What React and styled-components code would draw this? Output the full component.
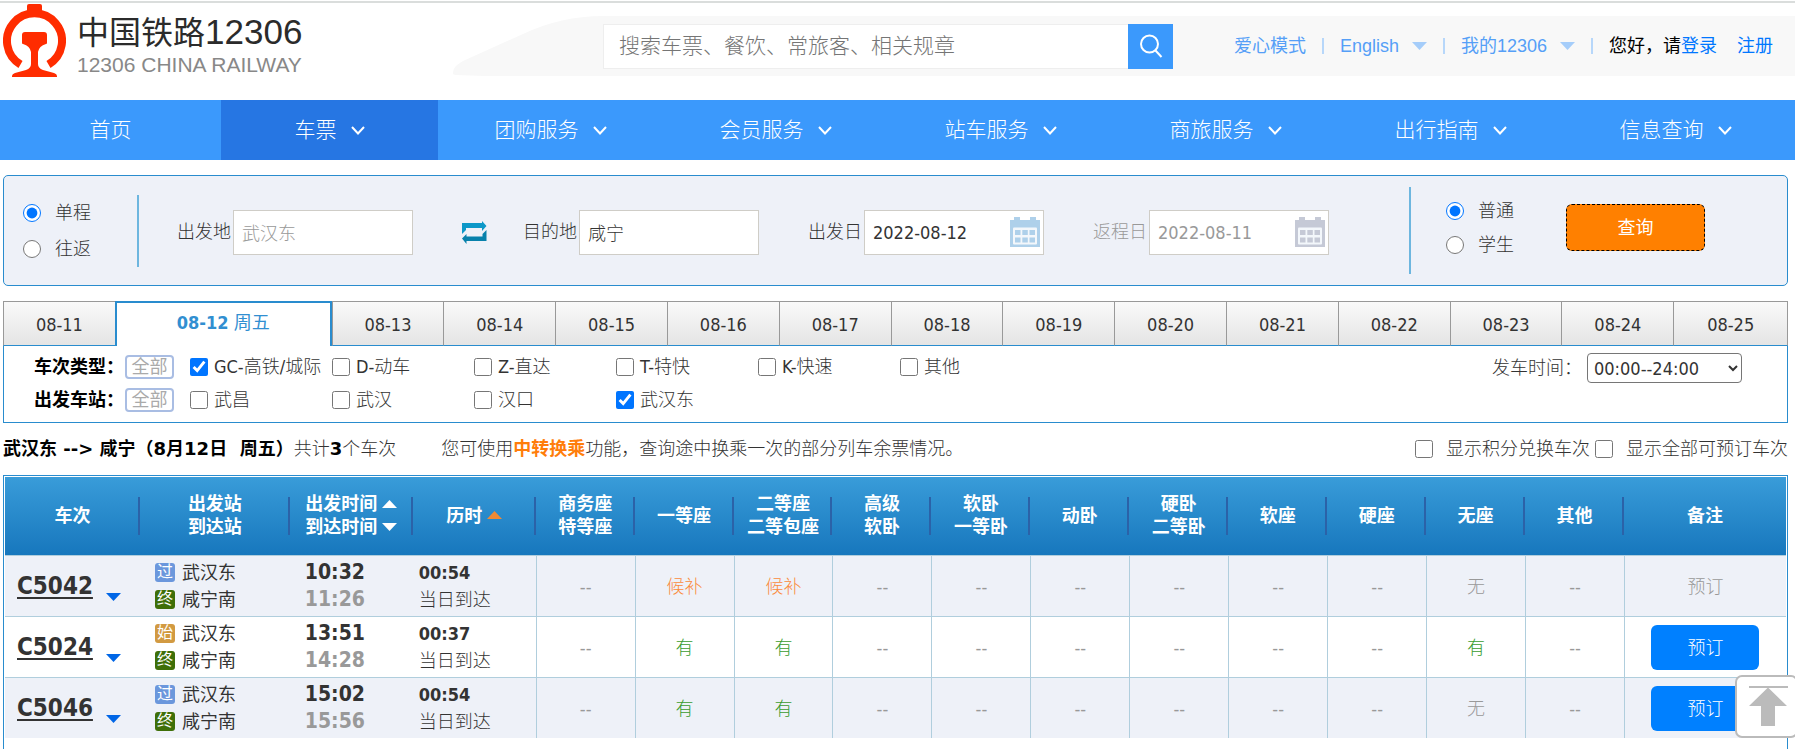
import React from 'react'
import styled, { createGlobalStyle, css } from 'styled-components'

const GlobalStyle = createGlobalStyle`
  * { box-sizing: border-box; }
  body {
    margin: 0;
    background: #fff;
    color: #333;
    font-family: "DejaVu Sans Condensed", "Noto Sans CJK SC", sans-serif;
    font-size: 18px;
    font-weight: 300;
    line-height: 24px;
  }
  a { text-decoration: none; }
  b { font-weight: 700; }
  button, input, select { font: inherit; margin: 0; }
  input[type="radio"], input[type="checkbox"] {
    width: 18px;
    height: 18px;
    flex: none;
  }
  svg { display: block; flex: none; }
`

/* ---------- header ---------- */

const Header = styled.header`
  display: flex;
  height: 100px;
  padding-top: 1px;
  font-family: "Liberation Sans", "Noto Sans CJK SC", sans-serif;
`
const TopLine = styled.div`
  height: 2px;
  margin-top: 1px;
  background: #dadddc;
  margin-bottom: -3px;
`
const Logo = styled.a`
  display: flex;
  flex: 0 0 453px;
  gap: 11px;
  padding: 3px 0 0 3px;
  color: #2b2b2b;
`
const LogoText = styled.div`
  padding-top: 8px;
  strong {
    display: block;
    font-size: 32px;
    font-weight: 400;
    line-height: 40px;
  }
  b {
    font-size: 35px;
    font-weight: 400;
  }
  small {
    display: block;
    color: #888;
    font-size: 21px;
    line-height: 24px;
  }
`
const Band = styled.div`
  display: flex;
  flex: 1;
  height: 60px;
  margin-top: 15px;
`
const BandBody = styled.div`
  display: flex;
  flex: 1;
  align-items: center;
  padding-right: 22px;
  background: #f8f8f8;
`
const SearchForm = styled.form`
  display: flex;
  height: 45px;
  input {
    width: 525px;
    padding: 0 15px;
    border: 1px solid #eee;
    border-right: 0;
    background: #fff;
    font-size: 21px;
    outline: none;
  }
  input::placeholder { color: #757575; }
  button {
    display: flex;
    align-items: center;
    justify-content: center;
    width: 45px;
    padding: 0;
    border: 0;
    background: #3b99fc;
  }
`
const UserLinks = styled.div`
  display: flex;
  align-items: center;
  gap: 16px;
  margin-left: auto;
  color: #000;
  font-weight: 400;
  white-space: nowrap;
`
const TopLink = styled.a`
  display: flex;
  align-items: center;
  gap: 13px;
  color: #559ff7;
`
const AuthLink = styled.a`
  color: #0077ff;
  & + & { margin-left: 20px; }
`
const Bar = styled.i`
  width: 2px;
  height: 16px;
  background: #b7d7fa;
`

/* ---------- main menu ---------- */

const Nav = styled.nav`
  display: grid;
  grid-template-columns: 221fr 217fr repeat(6, 225fr);
  height: 60px;
  padding-right: 7px;
  background: #3b99fc;
`
const NavItem = styled.a`
  display: flex;
  align-items: center;
  justify-content: center;
  gap: 14px;
  background: ${p => (p.$active ? '#2676e3' : 'transparent')};
  color: #fff;
  font-size: 21px;
`

/* ---------- query form ---------- */

const Main = styled.main`
  padding: 15px 7px 0 3px;
`
const QueryBox = styled.form`
  display: flex;
  align-items: center;
  height: 111px;
  padding: 0 82px 0 19px;
  border: 1px solid #298cce;
  border-radius: 5px;
  background: #eef1f8;
`
const RadioGroup = styled.div`
  display: flex;
  flex-direction: column;
  gap: ${p => p.$gap}px;
  label {
    display: flex;
    align-items: center;
    gap: 14px;
  }
`
const Rule = styled.div`
  width: 2px;
  height: ${p => p.$height}px;
  margin: ${p => p.$margin};
  background: #6db6df;
`
const Fields = styled.div`
  display: flex;
  align-items: center;
  gap: 49px;
  padding-top: 3px;
`
const Field = styled.div`
  display: flex;
  align-items: center;
  gap: 2px;
  color: ${p => (p.$muted ? '#999' : '#333')};
  white-space: nowrap;
`
const InputWrap = styled.div`
  position: relative;
  input {
    display: block;
    width: 180px;
    height: 45px;
    padding: 0 8px;
    border: 1px solid #cfcdc7;
    background: #fff;
    color: ${p => (p.$muted ? '#999' : '#333')};
  }
  svg {
    position: absolute;
    top: 7px;
    right: 4px;
  }
`
const SwapButton = styled.button`
  padding: 0;
  border: 0;
  background: none;
  margin-right: -13px;
`
const Passenger = styled.div`
  display: flex;
  align-items: center;
  gap: 52px;
  padding-bottom: 6px;
`
const Submit = styled.button`
  width: 139px;
  height: 47px;
  border: 1px dashed #000;
  border-radius: 6px;
  background: #ff8000;
  color: #fff;
  font-weight: 400;
`

/* ---------- date tabs and filters ---------- */

const Tabs = styled.div`
  display: flex;
  height: 45px;
  margin-top: 15px;
`
const Tab = styled.button`
  flex: 112 1 0;
  padding: 2px 0 0;
  border: solid #999;
  border-width: 1px 0 1px 1px;
  border-bottom-color: #298cce;
  background: linear-gradient(#fafafa, #e4e4e4);
  color: #333;
  &:last-child {
    flex-grow: 114;
    border-right-width: 1px;
  }
  ${p => p.$active && css`
    flex-grow: 215;
    padding: 0 0 4px;
    border: 2px solid #298cce;
    border-width: 2px 2px 0;
    background: #fff;
    color: #318fd1;
    font-weight: 400;
  `}
`
const FilterPanel = styled.div`
  display: flex;
  justify-content: space-between;
  height: 77px;
  padding: 4px 45px 0 30px;
  border: 1px solid #298cce;
  border-top: 0;
`
const FilterRow = styled.div`
  display: flex;
  align-items: center;
  height: 33px;
  color: #000;
  > b { width: 91px; }
`
const AllButton = styled.button`
  width: 49px;
  height: 24px;
  margin-right: 16px;
  padding: 0;
  border: 2px solid #a9bde3;
  border-radius: 4px;
  background: #fff;
  color: #aaa;
  font-weight: 400;
  line-height: 18px;
`
const Check = styled.label`
  display: flex;
  align-items: center;
  gap: ${p => p.$gap || 6}px;
  width: ${p => (p.$gap ? 'auto' : '142px')};
  color: #333;
  white-space: nowrap;
`
const TimeFilter = styled.div`
  display: flex;
  align-items: center;
  gap: 5px;
  height: 36px;
  select {
    width: 155px;
    height: 30px;
    padding: 0 2px;
    border: 1px solid #767676;
    border-radius: 4px;
    background: #fff;
    color: #333;
  }
`
const Summary = styled.div`
  display: flex;
  align-items: center;
  height: 52px;
  color: #333;
  white-space: nowrap;
  b {
    color: #000;
    font-family: "DejaVu Sans", "Noto Sans CJK SC", sans-serif;
  }
  p { margin: 0 0 0 45px; }
  p a { color: #ff7d0a; font-weight: 700; }
`
const SummaryChecks = styled.div`
  display: flex;
  gap: 5px;
  margin-left: auto;
`

/* ---------- result table ---------- */

const ResultBox = styled.div`
  padding: 1px 1px 11px;
  border: 1px solid #298cce;
  border-bottom: 0;
`
const Table = styled.table`
  width: 100%;
  border-spacing: 0;
  table-layout: fixed;
  text-align: center;
  thead { background: linear-gradient(#399cd9, #1777bd); }
  th {
    height: 78px;
    padding: 0 0 2px;
    background: linear-gradient(#2b62a8, #2b62a8) no-repeat right center / 2px 38px;
    color: #fff;
    line-height: 23px;
  }
  th:last-child { background: none; }
  td {
    height: 61px;
    padding: 0;
    border-top: 1px solid #b0cedd;
    line-height: 27px;
  }
  tbody tr:nth-child(odd) { background: #eef1f8; }
`
const SortLine = styled.div`
  display: flex;
  align-items: center;
  justify-content: center;
  gap: 5px;
`
const TrainCell = styled.td`
  text-align: left;
  div {
    display: flex;
    align-items: center;
    gap: 13px;
    padding-left: 12px;
  }
  a {
    color: #333;
    font-size: 24px;
    font-weight: 700;
    text-decoration: underline;
    text-decoration-thickness: 2px;
    text-underline-offset: 3px;
  }
  svg { margin-top: 22px; }
`
const StationCell = styled.td`
  text-align: left;
  div {
    display: flex;
    align-items: center;
    gap: 7px;
    padding-left: 15px;
    font-weight: 400;
  }
`
const badgeColors = { 过: '#6b97dc', 终: '#3f6f08', 始: '#d29a41' }
const Badge = styled.span`
  width: 20px;
  height: 19px;
  border-radius: 3px;
  background: ${p => badgeColors[p.children]};
  color: #fff;
  font-size: 16px;
  line-height: 18px;
  text-align: center;
`
const TimeCell = styled.td`
  padding-left: 15px !important;
  text-align: left;
  font-size: 21px;
  font-weight: 700;
  span { color: #999; }
`
const DurationCell = styled.td`
  padding-left: 6px !important;
  text-align: left;
`
const seatColors = { 候补: '#fb8b3c', 有: '#3a9c2f' }
const SeatCell = styled.td`
  border-left: 1px solid #b0cedd;
  color: ${p => seatColors[p.children] || '#999'};
`
const BookCell = styled.td`
  border-left: 1px solid #b0cedd;
  color: #999;
  button {
    width: 108px;
    height: 45px;
    border: 0;
    border-radius: 6px;
    background: #0080ff;
    color: #fff;
    vertical-align: middle;
  }
`
const ToTop = styled.button`
  position: fixed;
  right: -3px;
  bottom: 12px;
  width: 63px;
  height: 63px;
  padding: 0 0 0 11px;
  border: 2px solid #bbb;
  border-radius: 7px;
  background: #fff;
`

/* ---------- icons ---------- */

const RailwayLogo = () => (
  <svg width="63" height="73" viewBox="0 0 63 73">
    <path d="M17.500 60.500A27.500 27.500 0 1 1 45.500 60.500" fill="none" stroke="#ff2c00" strokeWidth="8" />
    <path d="M24 7V2q0-2 2-2h11q2 0 2 2v5z" fill="#ff2c00" />
    <path d="M22 28h19q3 0 3 3v8q0 1-1 1-7 2-8 8v12q0 4 5 6l11 3q3 1 3 3v1H9v-1q0-2 3-3l11-3q5-2 5-6V48q-1-6-8-8-1 0-1-1v-8q0-3 3-3z" fill="#ff2c00" />
  </svg>
)
const Nose = () => (
  <svg width="150" height="60" viewBox="0 0 150 60">
    <path d="M0 58C0 52 3 49 10 45L70 18Q108 0 150 0V60H32L2 59z" fill="#f8f8f8" />
  </svg>
)
const SearchIcon = () => (
  <svg width="24" height="24" viewBox="0 0 24 24" fill="none" stroke="#fff" strokeWidth="2">
    <circle cx="10.500" cy="10" r="8.500" />
    <path d="M16.500 16.500l6 6.500" />
  </svg>
)
const Triangle = ({ color, up }) => (
  <svg width="15" height="8" viewBox="0 0 15 8">
    <path d={up ? 'M0 8h15L7.500 0z' : 'M0 0h15L7.500 8z'} fill={color} />
  </svg>
)
const Chevron = () => (
  <svg width="14" height="9" viewBox="0 0 14 9">
    <path d="M1 1l6 6.500L13 1" fill="none" stroke="#fff" strokeWidth="2" />
  </svg>
)
const SwapIcon = () => (
  <svg width="25" height="23" viewBox="0 0 25 23">
    <path d="M0 13V2h20V0l4.500 5L20 10V7H4v2z" fill="#0c98c8" />
    <path d="M24.500 9v11H4.500v3L0 17.500 4.500 13v2.500h16V13z" fill="#0781ab" />
  </svg>
)
const Calendar = ({ color }) => (
  <svg width="30" height="30" viewBox="0 0 30 30">
    <path d="M0 3h4V0h6v3h10V0h6v3h4v27H0z" fill={color} />
    <rect x="3" y="10.500" width="24" height="17" rx="1" fill="#f3f7fb" />
    <path d="M5 13h5.500v5H5zM12.300 13h5.500v5h-5.500zM19.500 13H25v5h-5.500zM5 20.500h5.500v5H5zM12.300 20.500h5.500v5h-5.500zM19.500 20.500H25v5h-5.500z" fill={color} />
  </svg>
)
const TopArrow = () => (
  <svg width="40" height="41" viewBox="0 0 40 41">
    <path d="M1 0h39v2H1z" fill="#bbb" />
    <path d="M20 1.500L39 20H27v20H13V20H1z" fill="#bbb" />
  </svg>
)

/* ---------- data ---------- */

const menu = ['首页', '车票', '团购服务', '会员服务', '站车服务', '商旅服务', '出行指南', '信息查询']
const days = ['08-11', '08-12', '08-13', '08-14', '08-15', '08-16', '08-17', '08-18', '08-19', '08-20', '08-21', '08-22', '08-23', '08-24', '08-25']
const trainTypes = ['GC-高铁/城际', 'D-动车', 'Z-直达', 'T-特快', 'K-快速', '其他']
const stations = ['武昌', '武汉', '汉口', '武汉东']
const seats = [['商务座', '特等座'], ['一等座'], ['二等座', '二等包座'], ['高级', '软卧'], ['软卧', '一等卧'], ['动卧'], ['硬卧', '二等卧'], ['软座'], ['硬座'], ['无座'], ['其他']]
const no = '--'
const trains = [
  { code: 'C5042', mark: '过', start: '10:32', end: '11:26', time: '00:54', seats: [no, '候补', '候补', no, no, no, no, no, no, '无', no], book: false },
  { code: 'C5024', mark: '始', start: '13:51', end: '14:28', time: '00:37', seats: [no, '有', '有', no, no, no, no, no, no, '有', no], book: true },
  { code: 'C5046', mark: '过', start: '15:02', end: '15:56', time: '00:54', seats: [no, '有', '有', no, no, no, no, no, no, '无', no], book: true },
]
const colWidths = [135, 150, 123, 123, ...seats.map(() => 99), 162]

const App = () => (
  <>
    <GlobalStyle />
    <TopLine />
    <Header>
      <Logo href="#">
        <RailwayLogo />
        <LogoText>
          <strong>中国铁路<b>12306</b></strong>
          <small>12306 CHINA RAILWAY</small>
        </LogoText>
      </Logo>
      <Band>
        <Nose />
        <BandBody>
          <SearchForm>
            <input type="text" aria-label="搜索" placeholder="搜索车票、餐饮、常旅客、相关规章" />
            <button type="button" aria-label="搜索"><SearchIcon /></button>
          </SearchForm>
          <UserLinks>
            <TopLink href="#">爱心模式</TopLink>
            <Bar />
            <TopLink href="#">English <Triangle color="#a5cdfa" /></TopLink>
            <Bar />
            <TopLink href="#">我的12306 <Triangle color="#a5cdfa" /></TopLink>
            <Bar />
            <div>您好，请<AuthLink href="#">登录</AuthLink><AuthLink href="#">注册</AuthLink></div>
          </UserLinks>
        </BandBody>
      </Band>
    </Header>

    <Nav>
      {menu.map((name, i) => (
        <NavItem href="#" key={name} $active={i === 1}>
          {name}
          {i > 0 && <Chevron />}
        </NavItem>
      ))}
    </Nav>

    <Main>
      <QueryBox>
        <RadioGroup $gap={12}>
          <label><input type="radio" name="trip" defaultChecked />单程</label>
          <label><input type="radio" name="trip" />往返</label>
        </RadioGroup>
        <Rule $height={72} $margin="0 38px 0 46px" />
        <Fields>
          <Field>
            <label htmlFor="from">出发地</label>
            <InputWrap $muted><input id="from" type="text" defaultValue="武汉东" /></InputWrap>
          </Field>
          <SwapButton type="button" aria-label="切换"><SwapIcon /></SwapButton>
          <Field>
            <label htmlFor="to">目的地</label>
            <InputWrap><input id="to" type="text" defaultValue="咸宁" /></InputWrap>
          </Field>
          <Field>
            <label htmlFor="depart">出发日</label>
            <InputWrap>
              <input id="depart" type="text" defaultValue="2022-08-12" />
              <Calendar color="#aed0ea" />
            </InputWrap>
          </Field>
          <Field $muted>
            <label htmlFor="return">返程日</label>
            <InputWrap $muted>
              <input id="return" type="text" defaultValue="2022-08-11" />
              <Calendar color="#c5c9d6" />
            </InputWrap>
          </Field>
        </Fields>
        <Rule $height={87} $margin="0 35px 0 auto" />
        <Passenger>
          <RadioGroup $gap={10}>
            <label><input type="radio" name="passenger" defaultChecked />普通</label>
            <label><input type="radio" name="passenger" />学生</label>
          </RadioGroup>
          <Submit type="button">查询</Submit>
        </Passenger>
      </QueryBox>

      <Tabs>
        {days.map(day => (
          <Tab type="button" key={day} $active={day === '08-12'}>
            {day === '08-12' ? <><b>{day}</b> 周五</> : day}
          </Tab>
        ))}
      </Tabs>
      <FilterPanel>
        <div>
          <FilterRow>
            <b>车次类型：</b>
            <AllButton type="button">全部</AllButton>
            {trainTypes.map((t, i) => (
              <Check key={t}><input type="checkbox" defaultChecked={i === 0} />{t}</Check>
            ))}
          </FilterRow>
          <FilterRow>
            <b>出发车站：</b>
            <AllButton type="button">全部</AllButton>
            {stations.map((s, i) => (
              <Check key={s}><input type="checkbox" defaultChecked={i === 3} />{s}</Check>
            ))}
          </FilterRow>
        </div>
        <TimeFilter>
          <label htmlFor="hours">发车时间：</label>
          <select id="hours"><option>00:00--24:00</option></select>
        </TimeFilter>
      </FilterPanel>

      <Summary>
        <div>
          <b>武汉东 --&gt; 咸宁（8月12日&nbsp; 周五）</b>共计<b>3</b>个车次
        </div>
        <p>您可使用<a href="#">中转换乘</a>功能，查询途中换乘一次的部分列车余票情况。</p>
        <SummaryChecks>
          <Check $gap={13}><input type="checkbox" />显示积分兑换车次</Check>
          <Check $gap={13}><input type="checkbox" />显示全部可预订车次</Check>
        </SummaryChecks>
      </Summary>

      <ResultBox>
        <Table>
          <colgroup>
            {colWidths.map((w, i) => <col key={i} style={{ width: `${w / 17.82}%` }} />)}
          </colgroup>
          <thead>
            <tr>
              <th>车次</th>
              <th>出发站<br />到达站</th>
              <th>
                <SortLine>出发时间<Triangle up color="#fff" /></SortLine>
                <SortLine>到达时间<Triangle color="#fff" /></SortLine>
              </th>
              <th><SortLine>历时<Triangle up color="#f08a35" /></SortLine></th>
              {seats.map(lines => (
                <th key={lines.join()}>{lines[0]}{lines[1] && <><br />{lines[1]}</>}</th>
              ))}
              <th>备注</th>
            </tr>
          </thead>
          <tbody>
            {trains.map(train => (
              <tr key={train.code}>
                <TrainCell>
                  <div><a href="#">{train.code}</a><Triangle color="#0066e6" /></div>
                </TrainCell>
                <StationCell>
                  <div><Badge>{train.mark}</Badge>武汉东</div>
                  <div><Badge>终</Badge>咸宁南</div>
                </StationCell>
                <TimeCell>{train.start}<br /><span>{train.end}</span></TimeCell>
                <DurationCell><b>{train.time}</b><br />当日到达</DurationCell>
                {train.seats.map((seat, i) => <SeatCell key={i}>{seat}</SeatCell>)}
                <BookCell>{train.book ? <button type="button">预订</button> : '预订'}</BookCell>
              </tr>
            ))}
          </tbody>
        </Table>
      </ResultBox>
    </Main>

    <ToTop type="button" aria-label="返回顶部"><TopArrow /></ToTop>
  </>
)

export default App
